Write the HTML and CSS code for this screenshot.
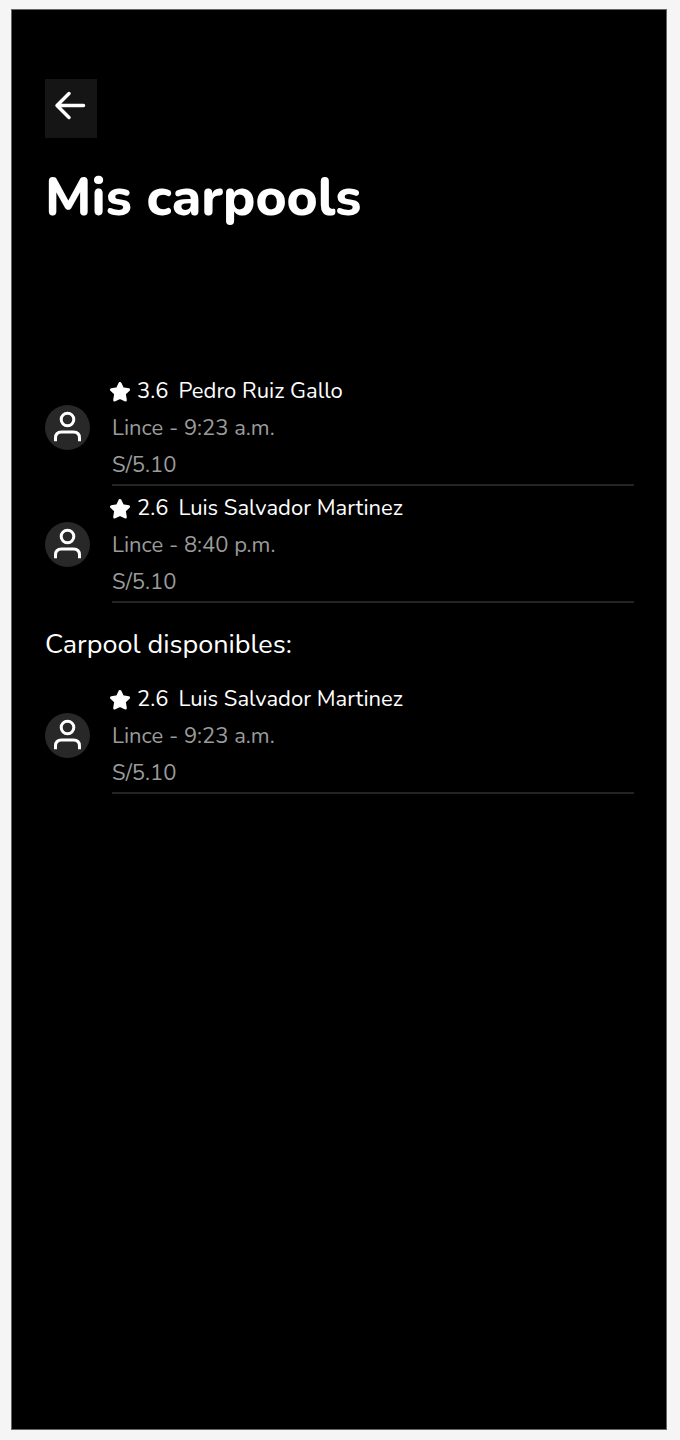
FILE: index.html
```html
<!DOCTYPE html>
<html lang="es">
<head>
<meta charset="utf-8">
<meta name="viewport" content="width=device-width, initial-scale=1">
<title>Mis carpools</title>
<link rel="stylesheet" href="styles.css">
</head>
<body>
<svg class="sprite" aria-hidden="true">
  <symbol id="person" viewBox="0 0 45 45">
    <circle cx="22.5" cy="14.5" r="6.3"/>
    <path d="M10.500 36.300V33Q10.500 27 16.500 27H28.500Q34.500 27 34.500 33V36.300"/>
  </symbol>
  <symbol id="star" viewBox="0 0 20 20">
    <path d="M10 1.500L12.600 6.800L18.500 7.700L14.300 11.800L15.300 18L10 15.400L4.700 18L5.700 11.800L1.500 7.700L7.400 6.800Z"/>
  </symbol>
</svg>
<main class="screen">
  <button class="back" type="button" aria-label="Volver">
    <svg class="back-icon" viewBox="0 0 32 28" aria-hidden="true"><path d="M29.500 14.500H3M15 2.500L3 14.500L15 26.500"/></svg>
  </button>
  <h1 class="title">Mis carpools</h1>
  <ul class="rides">
    <li class="ride">
      <svg class="avatar" aria-hidden="true"><use href="#person"/></svg>
      <div class="details">
        <p class="driver"><svg class="star" aria-hidden="true"><use href="#star"/></svg><span class="rating">3.6</span><span>Pedro Ruiz Gallo</span></p>
        <p class="info">Lince - 9:23 a.m.</p>
        <p class="info">S/5.10</p>
      </div>
    </li>
    <li class="ride">
      <svg class="avatar" aria-hidden="true"><use href="#person"/></svg>
      <div class="details">
        <p class="driver"><svg class="star" aria-hidden="true"><use href="#star"/></svg><span class="rating">2.6</span><span>Luis Salvador Martinez</span></p>
        <p class="info">Lince - 8:40 p.m.</p>
        <p class="info">S/5.10</p>
      </div>
    </li>
  </ul>
  <h2 class="subtitle">Carpool disponibles:</h2>
  <ul class="rides">
    <li class="ride">
      <svg class="avatar" aria-hidden="true"><use href="#person"/></svg>
      <div class="details">
        <p class="driver"><svg class="star" aria-hidden="true"><use href="#star"/></svg><span class="rating">2.6</span><span>Luis Salvador Martinez</span></p>
        <p class="info">Lince - 9:23 a.m.</p>
        <p class="info">S/5.10</p>
      </div>
    </li>
  </ul>
</main>
</body>
</html>
```
FILE: styles.css
```css
* {
  box-sizing: border-box;
  margin: 0;
  padding: 0;
}

body {
  display: flex;
  min-height: 100vh;
  padding: 9px 13px 10px 11px;
  background: #f5f5f5;
  font-family: Nunito, Lato, sans-serif;
  font-size: 22px;
  line-height: 37px;
}

.sprite {
  position: absolute;
  width: 0;
  height: 0;
}

.screen {
  flex: 1;
  padding: 69px 32px 32px 33px;
  border: 1px solid #666;
  background: #000;
  color: #fff;
}

.back {
  display: flex;
  width: 52px;
  height: 59px;
  padding: 12px 0 0 9px;
  border: 0;
  background: #151515;
}

.back-icon {
  width: 32px;
  height: 28px;
  overflow: visible;
  fill: none;
  stroke: #fff;
  stroke-width: 3.5;
  stroke-linecap: round;
  stroke-linejoin: round;
}

.title {
  margin: 24px 0 135px;
  font-size: 53px;
  font-weight: 800;
  line-height: 72px;
}

.rides {
  list-style: none;
}

.ride {
  display: flex;
  gap: 22px;
}

.avatar {
  flex: none;
  width: 45px;
  height: 45px;
  margin-top: 36px;
  border-radius: 50%;
  background: #282828;
  fill: none;
  stroke: #fff;
  stroke-width: 3;
}

.details {
  flex: 1;
  padding-top: 4px;
  border-bottom: 2px solid #242424;
}

.driver {
  display: flex;
  align-items: center;
}

.star {
  width: 20px;
  height: 20px;
  margin: 0 7px 0 -2px;
  fill: #fff;
  stroke: #fff;
  stroke-width: 3;
  stroke-linejoin: round;
}

.rating {
  margin-right: 10px;
}

.info {
  color: #9b9b9b;
}

.subtitle {
  padding: 23px 0 14px;
  font-size: 27px;
  font-weight: 400;
}
```
